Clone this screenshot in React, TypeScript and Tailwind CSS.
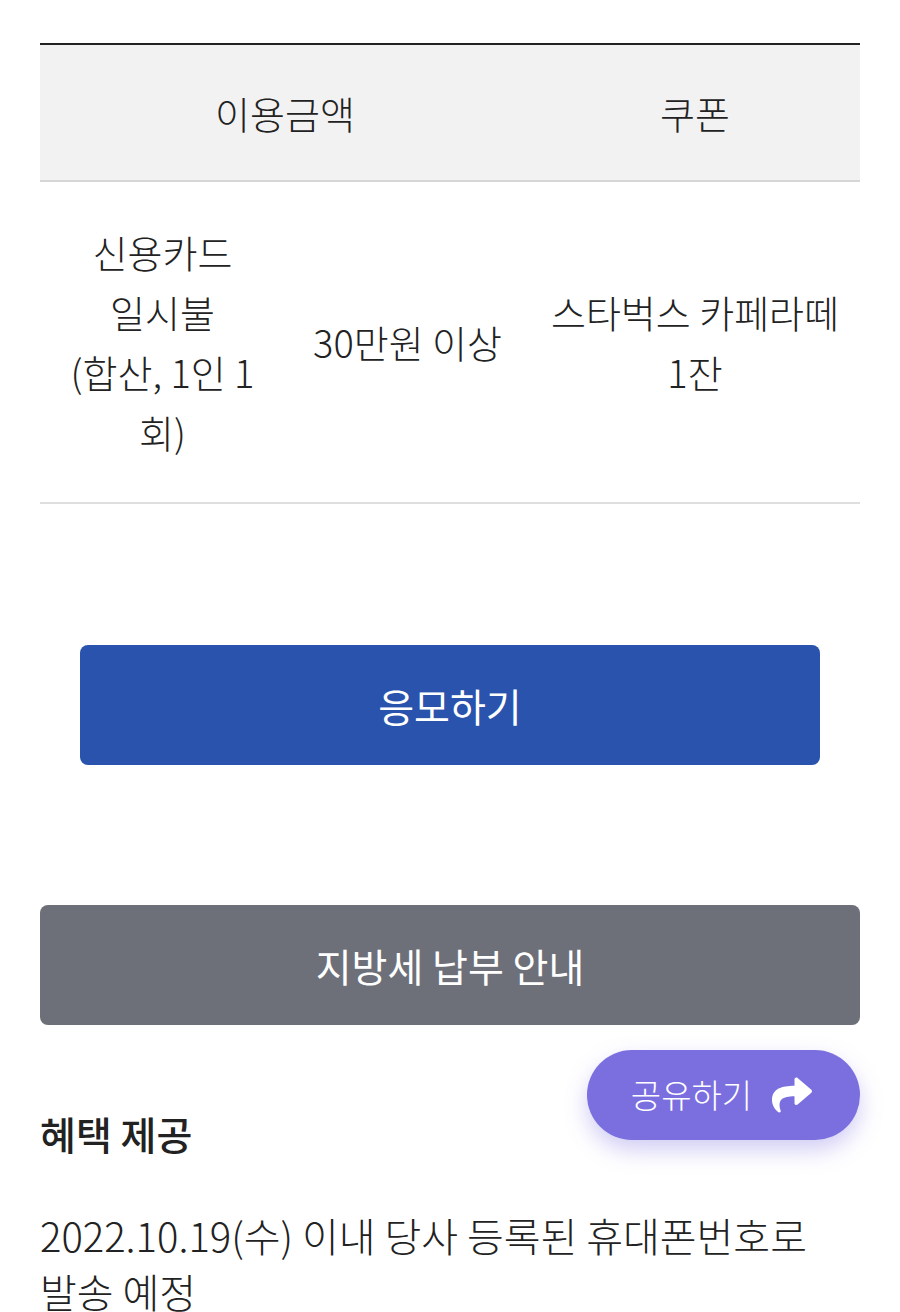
import { FaShare } from "react-icons/fa";

export default function App() {
    return (
        <div className="relative w-[900px] h-[1312px] overflow-hidden bg-white text-[#222] font-['Noto_Sans_CJK_KR','Noto_Sans',sans-serif]">
            <div className="px-10 pt-[43px]">
                {/* Benefit table */}
                <div className="border-t-2 border-[#222]">
                    <div className="grid grid-cols-[490px_330px] h-[137px] items-center text-center bg-[#f2f2f2] border-b-2 border-[#d6d6d6] text-[38px] font-light">
                        <span>이용금액</span>
                        <span>쿠폰</span>
                    </div>
                    <div className="grid grid-cols-[245px_245px_330px] items-center text-center py-[40px] leading-[60px] text-[38px] font-light border-b-2 border-[#dedede]">
                        <span>
                            신용카드
                            <br />
                            일시불
                            <br />
                            (합산, 1인 1
                            <br />
                            회)
                        </span>
                        <span>30만원 이상</span>
                        <span>
                            스타벅스 카페라떼
                            <br />
                            1잔
                        </span>
                    </div>
                </div>

                <button className="mt-[141px] mx-10 w-[740px] h-[120px] rounded-lg bg-[#2953ac] text-white text-[39px] flex items-center justify-center">
                    응모하기
                </button>

                <button className="mt-[140px] w-full h-[120px] rounded-lg bg-[#6d7079] text-white text-[39px] flex items-center justify-center">
                    지방세 납부 안내
                </button>

                <h2 className="mt-[84px] text-[39px] leading-[48px] font-medium">혜택 제공</h2>
                <p className="mt-[50px] text-[40px] leading-[56px] font-light">
                    2022.10.19(수) 이내 당사 등록된 휴대폰번호로
                    <br />
                    발송 예정
                </p>
            </div>

            {/* Floating share button */}
            <button className="absolute left-[587px] top-[1050px] w-[273px] h-[90px] rounded-full bg-[#7b6fe0] text-white text-[33px] font-light flex items-center justify-center gap-4 shadow-[0_10px_22px_rgba(123,111,224,0.35)]">
                <span>공유하기</span>
                <FaShare className="w-[48px] h-[40px]" />
            </button>
        </div>
    );
}
